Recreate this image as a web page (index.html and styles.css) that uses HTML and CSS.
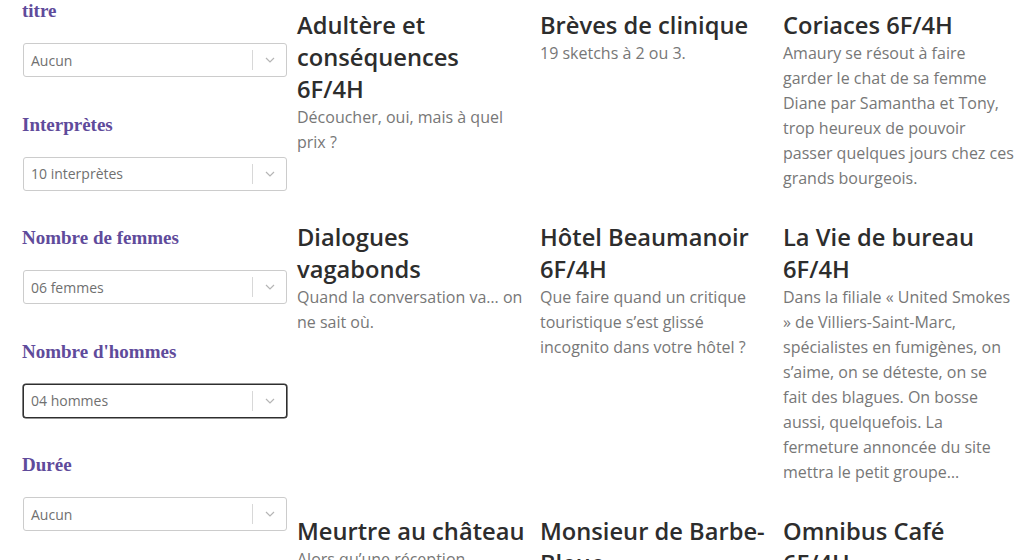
FILE: index.html
```html
<!DOCTYPE html>
<html lang="fr">
<head>
<meta charset="utf-8">
<title>Pièces</title>
<link rel="stylesheet" href="styles.css">
</head>
<body>
<div class="page">
  <aside class="filters">
    <div class="group">
      <div class="label">titre</div>
      <div class="select"><span class="value">Aucun</span><span class="ind"><svg width="10" height="6" viewBox="0 0 10 6"><path d="M1 1 L5 5 L9 1" fill="none" stroke="#b5b5b5" stroke-width="1.2"/></svg></span></div>
    </div>
    <div class="group">
      <div class="label">Interprètes</div>
      <div class="select"><span class="value">10 interprètes</span><span class="ind"><svg width="10" height="6" viewBox="0 0 10 6"><path d="M1 1 L5 5 L9 1" fill="none" stroke="#b5b5b5" stroke-width="1.2"/></svg></span></div>
    </div>
    <div class="group">
      <div class="label">Nombre de femmes</div>
      <div class="select"><span class="value">06 femmes</span><span class="ind"><svg width="10" height="6" viewBox="0 0 10 6"><path d="M1 1 L5 5 L9 1" fill="none" stroke="#b5b5b5" stroke-width="1.2"/></svg></span></div>
    </div>
    <div class="group">
      <div class="label">Nombre d'hommes</div>
      <div class="select focused"><span class="value">04 hommes</span><span class="ind"><svg width="10" height="6" viewBox="0 0 10 6"><path d="M1 1 L5 5 L9 1" fill="none" stroke="#b5b5b5" stroke-width="1.2"/></svg></span></div>
    </div>
    <div class="group">
      <div class="label">Durée</div>
      <div class="select"><span class="value">Aucun</span><span class="ind"><svg width="10" height="6" viewBox="0 0 10 6"><path d="M1 1 L5 5 L9 1" fill="none" stroke="#b5b5b5" stroke-width="1.2"/></svg></span></div>
    </div>
  </aside>
  <main class="grid">
    <article class="card">
      <h2>Adultère et conséquences 6F/4H</h2>
      <p>Découcher, oui, mais à quel prix ?</p>
    </article>
    <article class="card">
      <h2>Brèves de clinique</h2>
      <p>19 sketchs à 2 ou 3.</p>
    </article>
    <article class="card">
      <h2>Coriaces 6F/4H</h2>
      <p>Amaury se résout à faire garder le chat de sa femme Diane par Samantha et Tony, trop heureux de pouvoir passer quelques jours chez ces grands bourgeois.</p>
    </article>
    <article class="card">
      <h2>Dialogues vagabonds</h2>
      <p>Quand la conversation va… on ne sait où.</p>
    </article>
    <article class="card">
      <h2>Hôtel Beaumanoir 6F/4H</h2>
      <p>Que faire quand un critique touristique s’est glissé incognito dans votre hôtel ?</p>
    </article>
    <article class="card">
      <h2>La Vie de bureau 6F/4H</h2>
      <p>Dans la filiale « United Smokes » de Villiers-Saint-Marc, spécialistes en fumigènes, on s’aime, on se déteste, on se fait des blagues. On bosse aussi, quelquefois. La fermeture annoncée du site mettra le petit groupe…</p>
    </article>
    <article class="card">
      <h2>Meurtre au château</h2>
      <p>Alors qu’une réception mondaine bat son plein…</p>
    </article>
    <article class="card">
      <h2>Monsieur de Barbe-Bleue</h2>
      <p>Une relecture du conte.</p>
    </article>
    <article class="card">
      <h2>Omnibus Café 6F/4H</h2>
      <p>Des habitués et des passants.</p>
    </article>
  </main>
</div>
</body>
</html>
```

FILE: styles.css
```css
html, body {
  margin: 0;
  padding: 0;
  background: #ffffff;
  overflow: hidden;
}
body {
  font-family: "Open Sans", "DejaVu Sans", sans-serif;
  width: 1024px;
  height: 560px;
}
.page {
  display: flex;
  align-items: flex-start;
  gap: 10px;
  padding-left: 22px;
}
.filters {
  width: 265px;
  flex: none;
  display: flex;
  flex-direction: column;
}
.group {
  margin-bottom: 36.5px;
}
.label {
  font-family: "Liberation Serif", "DejaVu Serif", serif;
  font-weight: bold;
  font-size: 19px;
  line-height: 22px;
  color: #5f4b9b;
  margin-bottom: 21px;
}
.select {
  margin-left: 1px;
  width: 264px;
  height: 34px;
  box-sizing: border-box;
  border: 1px solid #cccccc;
  border-radius: 3px;
  display: flex;
  align-items: center;
  background: #fff;
}
.select.focused {
  border-color: #2e2e2e;
  box-shadow: 0 0 0 0.6px #2e2e2e;
}
.value {
  flex: 1;
  padding-left: 7px;
  font-size: 14px;
  color: #707070;
}
.ind {
  width: 33px;
  height: 20px;
  border-left: 1px solid #d8d8d8;
  display: flex;
  align-items: center;
  justify-content: center;
}
.ind svg {
  display: block;
}
.grid {
  display: grid;
  grid-template-columns: 231.5px 231.5px 231.5px;
  column-gap: 11.5px;
  row-gap: 30px;
  padding-top: 9px;
  align-items: start;
}
.card h2 {
  margin: 0;
  font-size: 23.7px;
  line-height: 32px;
  font-weight: 600;
  color: #2d2d2d;
}
.card p {
  margin: 0;
  font-size: 16px;
  line-height: 25px;
  color: #777777;
}
```
